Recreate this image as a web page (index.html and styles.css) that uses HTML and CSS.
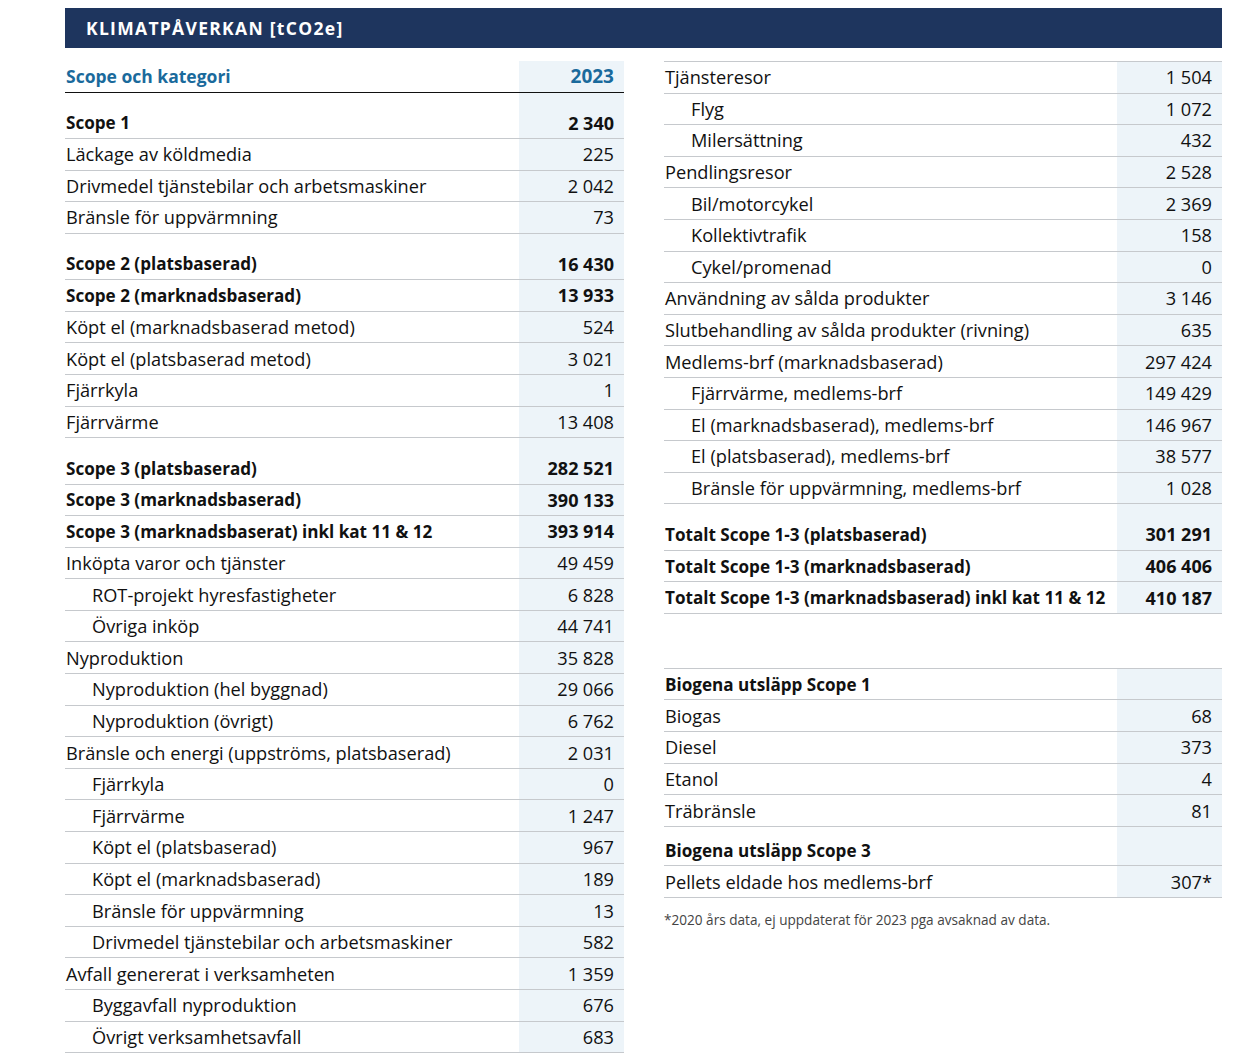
FILE: index.html
```html
<!DOCTYPE html>
<html lang="sv">
<head>
<meta charset="utf-8">
<title>Klimatpåverkan</title>
<link rel="stylesheet" href="styles.css">
</head>
<body>
<div class="page">
  <div class="banner">KLIMATPÅVERKAN [tCO2e]</div>
  <div class="cols">
    <div class="table">
      <div class="row head"><div class="lab">Scope och kategori</div><div class="val">2023</div></div>
      <div class="row b gap"><div class="lab">Scope 1</div><div class="val">2 340</div></div>
      <div class="row"><div class="lab">Läckage av köldmedia</div><div class="val">225</div></div>
      <div class="row"><div class="lab">Drivmedel tjänstebilar och arbetsmaskiner</div><div class="val">2 042</div></div>
      <div class="row"><div class="lab">Bränsle för uppvärmning</div><div class="val">73</div></div>
      <div class="row b gap"><div class="lab">Scope 2 (platsbaserad)</div><div class="val">16 430</div></div>
      <div class="row b"><div class="lab">Scope 2 (marknadsbaserad)</div><div class="val">13 933</div></div>
      <div class="row"><div class="lab">Köpt el (marknadsbaserad metod)</div><div class="val">524</div></div>
      <div class="row"><div class="lab">Köpt el (platsbaserad metod)</div><div class="val">3 021</div></div>
      <div class="row"><div class="lab">Fjärrkyla</div><div class="val">1</div></div>
      <div class="row"><div class="lab">Fjärrvärme</div><div class="val">13 408</div></div>
      <div class="row b gap"><div class="lab">Scope 3 (platsbaserad)</div><div class="val">282 521</div></div>
      <div class="row b"><div class="lab">Scope 3 (marknadsbaserad)</div><div class="val">390 133</div></div>
      <div class="row b"><div class="lab">Scope 3 (marknadsbaserat) inkl kat 11 &amp; 12</div><div class="val">393 914</div></div>
      <div class="row"><div class="lab">Inköpta varor och tjänster</div><div class="val">49 459</div></div>
      <div class="row sub"><div class="lab">ROT-projekt hyresfastigheter</div><div class="val">6 828</div></div>
      <div class="row sub"><div class="lab">Övriga inköp</div><div class="val">44 741</div></div>
      <div class="row"><div class="lab">Nyproduktion</div><div class="val">35 828</div></div>
      <div class="row sub"><div class="lab">Nyproduktion (hel byggnad)</div><div class="val">29 066</div></div>
      <div class="row sub"><div class="lab">Nyproduktion (övrigt)</div><div class="val">6 762</div></div>
      <div class="row"><div class="lab">Bränsle och energi (uppströms, platsbaserad)</div><div class="val">2 031</div></div>
      <div class="row sub"><div class="lab">Fjärrkyla</div><div class="val">0</div></div>
      <div class="row sub"><div class="lab">Fjärrvärme</div><div class="val">1 247</div></div>
      <div class="row sub"><div class="lab">Köpt el (platsbaserad)</div><div class="val">967</div></div>
      <div class="row sub"><div class="lab">Köpt el (marknadsbaserad)</div><div class="val">189</div></div>
      <div class="row sub"><div class="lab">Bränsle för uppvärmning</div><div class="val">13</div></div>
      <div class="row sub"><div class="lab">Drivmedel tjänstebilar och arbetsmaskiner</div><div class="val">582</div></div>
      <div class="row"><div class="lab">Avfall genererat i verksamheten</div><div class="val">1 359</div></div>
      <div class="row sub"><div class="lab">Byggavfall nyproduktion</div><div class="val">676</div></div>
      <div class="row sub"><div class="lab">Övrigt verksamhetsavfall</div><div class="val">683</div></div>
    </div>
    <div class="right">
      <div class="table topline">
        <div class="row"><div class="lab">Tjänsteresor</div><div class="val">1 504</div></div>
        <div class="row sub"><div class="lab">Flyg</div><div class="val">1 072</div></div>
        <div class="row sub"><div class="lab">Milersättning</div><div class="val">432</div></div>
        <div class="row"><div class="lab">Pendlingsresor</div><div class="val">2 528</div></div>
        <div class="row sub"><div class="lab">Bil/motorcykel</div><div class="val">2 369</div></div>
        <div class="row sub"><div class="lab">Kollektivtrafik</div><div class="val">158</div></div>
        <div class="row sub"><div class="lab">Cykel/promenad</div><div class="val">0</div></div>
        <div class="row"><div class="lab">Användning av sålda produkter</div><div class="val">3 146</div></div>
        <div class="row"><div class="lab">Slutbehandling av sålda produkter (rivning)</div><div class="val">635</div></div>
        <div class="row"><div class="lab">Medlems-brf (marknadsbaserad)</div><div class="val">297 424</div></div>
        <div class="row sub"><div class="lab">Fjärrvärme, medlems-brf</div><div class="val">149 429</div></div>
        <div class="row sub"><div class="lab">El (marknadsbaserad), medlems-brf</div><div class="val">146 967</div></div>
        <div class="row sub"><div class="lab">El (platsbaserad), medlems-brf</div><div class="val">38 577</div></div>
        <div class="row sub"><div class="lab">Bränsle för uppvärmning, medlems-brf</div><div class="val">1 028</div></div>
        <div class="row b gap"><div class="lab">Totalt Scope 1-3 (platsbaserad)</div><div class="val">301 291</div></div>
        <div class="row b"><div class="lab">Totalt Scope 1-3 (marknadsbaserad)</div><div class="val">406 406</div></div>
        <div class="row b"><div class="lab">Totalt Scope 1-3 (marknadsbaserad) inkl kat 11 &amp; 12</div><div class="val">410 187</div></div>
      </div>
      <div class="table topline bio">
        <div class="row b"><div class="lab">Biogena utsläpp Scope 1</div><div class="val"></div></div>
        <div class="row"><div class="lab">Biogas</div><div class="val">68</div></div>
        <div class="row"><div class="lab">Diesel</div><div class="val">373</div></div>
        <div class="row"><div class="lab">Etanol</div><div class="val">4</div></div>
        <div class="row"><div class="lab">Träbränsle</div><div class="val">81</div></div>
        <div class="row b gap-s"><div class="lab">Biogena utsläpp Scope 3</div><div class="val"></div></div>
        <div class="row"><div class="lab">Pellets eldade hos medlems-brf</div><div class="val">307*</div></div>
      </div>
      <p class="note">*2020 års data, ej uppdaterat för 2023 pga avsaknad av data.</p>
    </div>
  </div>
</div>
</body>
</html>
```
FILE: styles.css
```css
* { box-sizing: border-box; }
body {
  margin: 0;
  background: #fff;
  font-family: "Open Sans", "Liberation Sans", sans-serif;
  color: #111;
}
.page {
  padding: 8px 13px 0 65px;
  width: 1235px;
}
.banner {
  background: #1e355e;
  color: #fff;
  height: 40px;
  display: flex;
  align-items: center;
  padding-left: 21px;
  font-weight: 700;
  font-size: 17.5px;
  letter-spacing: 1.3px;
}
.cols {
  display: grid;
  grid-template-columns: 559px 558px;
  column-gap: 40px;
  margin-top: 13px;
}
.table {
  display: flex;
  flex-direction: column;
}
.row {
  display: flex;
  height: 31.6px;
  border-bottom: 1px solid #c6c9cd;
  font-size: 18.2px;
}
.row .lab {
  flex: 1;
  display: flex;
  align-items: center;
  padding-left: 1px;
  white-space: nowrap;
}
.row .val {
  width: 105px;
  background: #edf4f9;
  display: flex;
  align-items: center;
  justify-content: flex-end;
  padding-right: 10px;
  white-space: nowrap;
}
.row.sub .lab { padding-left: 27px; }
.row.b { font-weight: 700; font-size: 17.1px; }
.row.b .val { font-size: 18px; }
.row.gap { height: 46.4px; }
.row.gap .lab, .row.gap .val { padding-top: 14.8px; }
.row.gap-s { height: 39.4px; }
.row.gap-s .lab, .row.gap-s .val { padding-top: 8px; }
.row.head {
  border-bottom: 1.5px solid #111;
  color: #1a6a9c;
  font-weight: 700;
  font-size: 17.5px;
}
.row.head .val { font-size: 19px; }
.topline { border-top: 1px solid #c6c9cd; }
.bio { margin-top: 54px; }
.note {
  margin: 12px 0 0 0;
  font-size: 13.6px;
  color: #444;
}
```
